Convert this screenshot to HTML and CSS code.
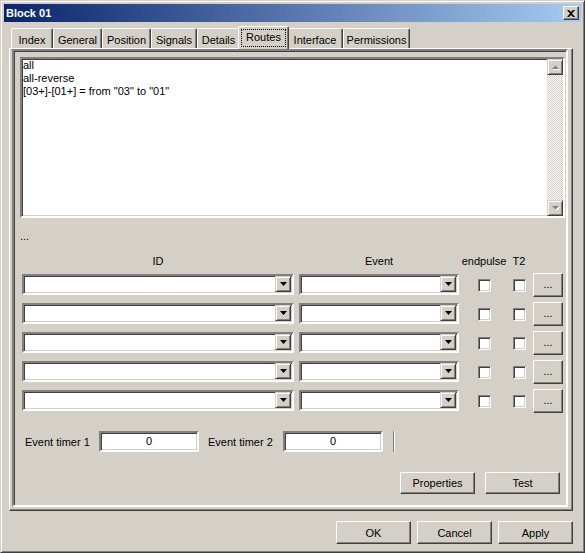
FILE: index.html
```html
<!DOCTYPE html>
<html lang="en">
<head>
  <meta charset="UTF-8" />
  <title>Block 01</title>
  <link rel="stylesheet" href="styles.css">
</head>
<body>
  <div class="window">
    <div class="titlebar">
      <span class="title">Block 01</span>
      <div class="close">
        <svg width="8" height="7" viewBox="0 0 8 7"><path d="M0 0h2l2 2 2-2h2L5 3.5 8 7H6L4 5 2 7H0l3-3.5z" fill="#000"/></svg>
      </div>
    </div>

    <div class="tabs">
      <div class="tab tab-index">Index</div>
      <div class="tab tab-general">General</div>
      <div class="tab tab-position">Position</div>
      <div class="tab tab-signals">Signals</div>
      <div class="tab tab-details">Details</div>
      <div class="tab tab-routes active"><span class="focus">Routes</span></div>
      <div class="tab tab-interface">Interface</div>
      <div class="tab tab-permissions">Permissions</div>
    </div>

    <div class="tabpanel">
      <div class="frame">
        <div class="listbox">
          <div class="items">
            <div>all</div>
            <div>all-reverse</div>
            <div>[03+]-[01+] = from "03" to "01"</div>
          </div>
          <div class="vscroll">
            <div class="sbtn">
              <svg width="9" height="6" viewBox="0 0 9 6"><polygon points="1,5 8,5 4.5,1.5" fill="#fff" transform="translate(1,1)"/><polygon points="1,5 8,5 4.5,1.5" fill="#808080"/></svg>
            </div>
            <div class="track"></div>
            <div class="sbtn">
              <svg width="9" height="6" viewBox="0 0 9 6"><polygon points="1,1 8,1 4.5,4.5" fill="#fff" transform="translate(1,1)"/><polygon points="1,1 8,1 4.5,4.5" fill="#808080"/></svg>
            </div>
          </div>
        </div>

        <div class="dots">...</div>

        <div class="routes">
          <div class="hd hd-id">ID</div>
          <div class="hd">Event</div>
          <div class="hd">endpulse</div>
          <div class="hd">T2</div>
          <div></div>

          <div class="combo combo-id"><div class="drop"><svg width="7" height="4"><polygon points="0,0 7,0 3.5,4" fill="#000"/></svg></div></div>
          <div class="combo combo-event"><div class="drop"><svg width="7" height="4"><polygon points="0,0 7,0 3.5,4" fill="#000"/></svg></div></div>
          <div class="check"></div>
          <div class="check"></div>
          <div class="btn btn-more">...</div>

          <div class="combo combo-id"><div class="drop"><svg width="7" height="4"><polygon points="0,0 7,0 3.5,4" fill="#000"/></svg></div></div>
          <div class="combo combo-event"><div class="drop"><svg width="7" height="4"><polygon points="0,0 7,0 3.5,4" fill="#000"/></svg></div></div>
          <div class="check"></div>
          <div class="check"></div>
          <div class="btn btn-more">...</div>

          <div class="combo combo-id"><div class="drop"><svg width="7" height="4"><polygon points="0,0 7,0 3.5,4" fill="#000"/></svg></div></div>
          <div class="combo combo-event"><div class="drop"><svg width="7" height="4"><polygon points="0,0 7,0 3.5,4" fill="#000"/></svg></div></div>
          <div class="check"></div>
          <div class="check"></div>
          <div class="btn btn-more">...</div>

          <div class="combo combo-id"><div class="drop"><svg width="7" height="4"><polygon points="0,0 7,0 3.5,4" fill="#000"/></svg></div></div>
          <div class="combo combo-event"><div class="drop"><svg width="7" height="4"><polygon points="0,0 7,0 3.5,4" fill="#000"/></svg></div></div>
          <div class="check"></div>
          <div class="check"></div>
          <div class="btn btn-more">...</div>

          <div class="combo combo-id"><div class="drop"><svg width="7" height="4"><polygon points="0,0 7,0 3.5,4" fill="#000"/></svg></div></div>
          <div class="combo combo-event"><div class="drop"><svg width="7" height="4"><polygon points="0,0 7,0 3.5,4" fill="#000"/></svg></div></div>
          <div class="check"></div>
          <div class="check"></div>
          <div class="btn btn-more">...</div>
        </div>

        <div class="timers">
          <span class="label label-1">Event timer 1</span>
          <div class="field">0</div>
          <span class="label label-2">Event timer 2</span>
          <div class="field">0</div>
          <div class="etched"></div>
        </div>

        <div class="actions">
          <div class="btn btn-wide">Properties</div>
          <div class="btn btn-wide">Test</div>
        </div>
      </div>
    </div>

    <div class="footer">
      <div class="btn btn-dlg">OK</div>
      <div class="btn btn-dlg">Cancel</div>
      <div class="btn btn-dlg">Apply</div>
    </div>
  </div>
</body>
</html>
```

FILE: styles.css
```css
* {
  box-sizing: border-box;
}
body {
  margin: 0;
  background: #d4d0c8;
  font-family: "Liberation Sans", Arial, sans-serif;
  font-size: 11px;
  color: #000;
}
.window {
  width: 585px;
  height: 553px;
  border: 1px solid;
  border-color: #d4d0c8 #404040 #404040 #d4d0c8;
  box-shadow: inset 1px 1px #fff, inset -1px -1px #808080;
  padding: 3px;
  display: flex;
  flex-direction: column;
}

/* title bar */
.titlebar {
  height: 18px;
  flex: none;
  background: linear-gradient(to right, #0a246a, #a6caf0);
  display: flex;
  align-items: center;
  justify-content: space-between;
  padding: 0 2px;
}
.title {
  color: #fff;
  font-weight: bold;
  font-size: 11px;
}
.close {
  width: 16px;
  height: 14px;
  background: #d4d0c8;
  border: 1px solid;
  border-color: #fff #404040 #404040 #fff;
  box-shadow: inset -1px -1px #808080;
  display: flex;
  align-items: center;
  justify-content: center;
}

/* tabs */
.tabs {
  height: 26px;
  flex: none;
  display: flex;
  align-items: flex-end;
  padding-left: 7px;
}
.tab {
  height: 20px;
  border: 1px solid;
  border-bottom: 0;
  border-color: #fff #404040 transparent #fff;
  border-radius: 2px 2px 0 0;
  box-shadow: inset -1px 0 #808080;
  text-align: center;
  padding-top: 2px;
  line-height: 18px;
  white-space: nowrap;
}
.tab-index { width: 42px; }
.tab-general { width: 49px; }
.tab-position { width: 49px; }
.tab-signals { width: 46px; }
.tab-details { width: 43px; }
.tab-routes { width: 47px; }
.tab-interface { width: 56px; }
.tab-permissions { width: 67px; }
.tab.active {
  position: relative;
  z-index: 1;
  width: 51px;
  height: 23px;
  margin: 0 -2px -1px;
  background: #d4d0c8;
  padding: 2px 2px 0 2px;
  line-height: 17px;
}
.focus {
  display: block;
  height: 18px;
  outline: 1px dotted #000;
  outline-offset: -1px;
}

/* tab page */
.tabpanel {
  width: 564px;
  height: 463px;
  flex: none;
  margin-left: 5px;
  border: 1px solid;
  border-color: #fff #404040 #404040 #fff;
  box-shadow: inset -1px -1px #808080;
  padding: 0 4px 3px 2px;
  display: flex;
}
.frame {
  flex: 1;
  border: 2px solid;
  border-color: #808080 #fff #fff #808080;
  box-shadow: inset 1px 1px #404040;
  display: flex;
  flex-direction: column;
}

/* route list */
.listbox {
  height: 161px;
  margin: 6px 1px 0 6px;
  background: #fff;
  border: 2px solid;
  border-color: #808080 #fff #fff #808080;
  box-shadow: inset 1px 1px #404040, inset -1px -1px #d4d0c8;
  display: flex;
}
.items {
  flex: 1;
  padding: 0 1px;
  line-height: 13px;
}
.vscroll {
  width: 16px;
  display: flex;
  flex-direction: column;
}
.sbtn {
  height: 16px;
  flex: none;
  background: #d4d0c8;
  border: 1px solid;
  border-color: #d4d0c8 #404040 #404040 #d4d0c8;
  box-shadow: inset 1px 1px #fff, inset -1px -1px #808080;
  display: flex;
  align-items: center;
  justify-content: center;
}
.track {
  flex: 1;
  background: repeating-conic-gradient(#fff 0 25%, #d4d0c8 0 50%) 0 0 / 2px 2px;
}
.dots {
  margin-top: 12px;
  padding-left: 6px;
  line-height: 13px;
}

/* route rows */
.routes {
  margin: 12px 0 0 8px;
  display: grid;
  grid-template-columns: 277px 160px 50px 20px 34px;
  grid-template-rows: 18px repeat(5, 29px);
}
.hd {
  text-align: center;
  line-height: 13px;
}
.hd-id {
  padding-right: 5px;
}
.combo {
  height: 21px;
  margin-top: 1px;
  background: #fff;
  border: 2px solid;
  border-color: #808080 #fff #fff #808080;
  box-shadow: inset 1px 1px #404040, inset -1px -1px #d4d0c8;
  display: flex;
  justify-content: flex-end;
  padding: 0 1px 1px 0;
}
.combo-id {
  width: 272px;
}
.combo-event {
  width: 160px;
}
.drop {
  width: 16px;
  height: 16px;
  background: #d4d0c8;
  border: 1px solid;
  border-color: #d4d0c8 #404040 #404040 #d4d0c8;
  box-shadow: inset 1px 1px #fff, inset -1px -1px #808080;
  display: flex;
  align-items: center;
  justify-content: center;
}
.check {
  width: 13px;
  height: 13px;
  margin-top: 6px;
  justify-self: center;
  background: #fff;
  border: 1px solid;
  border-color: #808080 #fff #fff #808080;
  box-shadow: inset 1px 1px #404040, inset -1px -1px #d4d0c8;
}

/* buttons */
.btn {
  background: #d4d0c8;
  border: 1px solid;
  border-color: #fff #404040 #404040 #fff;
  box-shadow: inset -1px -1px #808080;
  display: flex;
  align-items: center;
  justify-content: center;
}
.btn-more {
  width: 30px;
  height: 24px;
  justify-self: end;
  padding-bottom: 2px;
}
.btn-wide {
  width: 75px;
  height: 22px;
}
.btn-dlg {
  width: 75px;
  height: 23px;
}

/* timers */
.timers {
  margin-top: 13px;
  padding-left: 11px;
  height: 21px;
  display: flex;
  align-items: center;
}
.label-1 {
  width: 74px;
}
.label-2 {
  width: 75px;
  margin-left: 9px;
}
.field {
  width: 100px;
  height: 21px;
  background: #fff;
  border: 2px solid;
  border-color: #808080 #fff #fff #808080;
  box-shadow: inset 1px 1px #404040, inset -1px -1px #d4d0c8;
  text-align: center;
  line-height: 16px;
}
.etched {
  width: 2px;
  height: 21px;
  margin-left: 10px;
  border-left: 1px solid #808080;
  border-right: 1px solid #fff;
}
.actions {
  margin: 20px 6px 0 0;
  display: flex;
  justify-content: flex-end;
  gap: 10px;
}

/* dialog buttons */
.footer {
  margin-top: 10px;
  padding-right: 8px;
  display: flex;
  justify-content: flex-end;
  gap: 6px;
}
```
